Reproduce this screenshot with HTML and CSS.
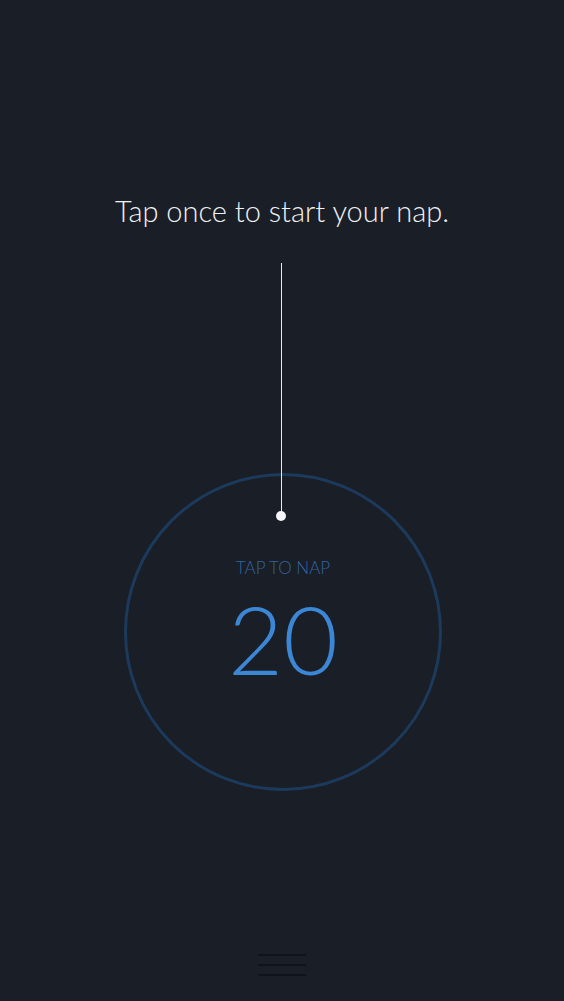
FILE: index.html
```html
<!DOCTYPE html>
<html>
<head>
  <title>Nap</title>
  <meta name="viewport" content="width=device-width, initial-scale=1">
  <link rel="stylesheet" href="styles.css">
</head>

<body>

  <main class="screen">
	<h1 class="hint">Tap once to start your nap.</h1>

	<div class="dial">
	  <span class="pointer"></span>
	  <span class="pointer-dot"></span>
	  <p class="dial-label">TAP TO NAP</p>
	  <p class="dial-minutes">20</p>
	</div>

	<footer class="menu">
	  <span class="menu-bar"></span>
	  <span class="menu-bar"></span>
	  <span class="menu-bar"></span>
	</footer>
  </main>

</body>

</html>
```

FILE: styles.css
```css
html, body {
  margin: 0;
  padding: 0;
  background: #1a1e26;
  font-family: Lato, "Open Sans", sans-serif;
}

.screen {
  display: flex;
  flex-direction: column;
  align-items: center;
  min-height: 1001px;
}

.hint {
  margin: 194px 0 0;
  font-size: 29px;
  font-weight: 300;
  line-height: 1.2;
  color: #f0f2f4;
}

.dial {
  position: relative;
  box-sizing: border-box;
  width: 318px;
  height: 318px;
  margin-top: 244px;
  margin-left: 2px;
  padding-top: 82px;
  border: 3px solid #1c3a5c;
  border-radius: 50%;
  text-align: center;
}

/* line hanging down from the hint into the dial */
.pointer {
  position: absolute;
  left: 50%;
  top: -213px;
  width: 1px;
  height: 253px;
  margin-left: -2px;
  background: #e8eaee;
}

.pointer-dot {
  position: absolute;
  left: 50%;
  top: 35px;
  width: 10px;
  height: 10px;
  margin-left: -7px;
  border-radius: 50%;
  background: #f4f5f7;
}

.dial-label {
  margin: 0;
  font-size: 17px;
  font-weight: 300;
  line-height: 1.2;
  color: #3264a0;
}

.dial-minutes {
  margin: 3px 0 0;
  font-size: 95px;
  font-weight: 300;
  line-height: 1.2;
  color: #3b87d6;
}

.menu {
  display: flex;
  flex-direction: column;
  gap: 8px;
  margin-top: auto;
  padding-bottom: 25px;
}

.menu-bar {
  display: block;
  width: 48px;
  height: 2px;
  background: #0f131a;
}
```
